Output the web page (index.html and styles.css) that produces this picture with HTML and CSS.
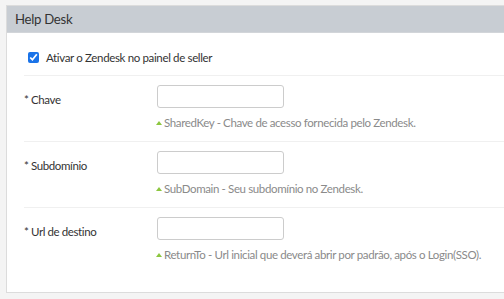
FILE: index.html
```html
<!DOCTYPE html>
<html lang="pt">
<head>
<meta charset="utf-8">
<link rel="stylesheet" href="styles.css">
</head>
<body>
<div class="panel">
  <div class="panel-head">Help Desk</div>
  <div class="panel-body">
    <label class="check-row">
      <input type="checkbox" checked class="check">
      <span>Ativar o Zendesk no painel de seller</span>
    </label>
    <div class="field">
      <div class="label">* Chave</div>
      <div class="control">
        <input type="text" class="input">
        <div class="help"><span class="caret"></span>SharedKey - Chave de acesso fornecida pelo Zendesk.</div>
      </div>
    </div>
    <div class="field">
      <div class="label">* Subdomínio</div>
      <div class="control">
        <input type="text" class="input">
        <div class="help"><span class="caret"></span>SubDomain - Seu subdomínio no Zendesk.</div>
      </div>
    </div>
    <div class="field last">
      <div class="label">* Url de destino</div>
      <div class="control">
        <input type="text" class="input">
        <div class="help"><span class="caret"></span>ReturnTo - Url inicial que deverá abrir por padrão, após o Login(SSO).</div>
      </div>
    </div>
  </div>
</div>
</body>
</html>
```
FILE: styles.css
```css
html, body {
  margin: 0;
  padding: 0;
  background: #f4f4f4;
  font-family: Lato, "Liberation Sans", sans-serif;
  color: #333;
}
body {
  padding: 5px 0 0 6px;
  overflow: hidden;
}
.panel {
  width: 520px;
  background: #fff;
  border: 1px solid #dcdcdc;
  border-right: none;
  height: 288px;
  box-sizing: border-box;
}
.panel-head {
  background: #c8cdd3;
  border-bottom: 1px solid #d2d5d9;
  height: 27px;
  box-sizing: border-box;
  padding: 6px 0 0 8px;
  font-size: 13.2px;
  line-height: 15px;
  letter-spacing: -0.3px;
  color: #333;
}
.panel-body {
  padding: 0 0 0 17px;
}
.check-row {
  display: flex;
  align-items: center;
  height: 43px;
  padding: 7px 0 0 4px;
  gap: 7px;
  font-size: 11.5px;
  letter-spacing: -0.35px;
  border-bottom: 1px solid #f0f0f0;
  box-sizing: border-box;
}
.check {
  margin: 0;
  width: 11px;
  height: 11px;
  accent-color: #1a73e8;
}
.field {
  display: flex;
  border-bottom: 1px solid #f0f0f0;
  height: 66px;
  box-sizing: border-box;
  padding-top: 9px;
}
.field.last {
  border-bottom: none;
}
.label {
  width: 133px;
  font-size: 11.5px;
  letter-spacing: -0.4px;
  line-height: 13px;
  padding-top: 8px;
}
.control {
  display: flex;
  flex-direction: column;
}
.input {
  width: 127px;
  height: 23px;
  box-sizing: border-box;
  border: 1px solid #ccc;
  border-radius: 3px;
  margin: 0;
  background: #fff;
}
.help {
  margin-top: 8px;
  margin-left: -1px;
  font-size: 11.5px;
  letter-spacing: -0.37px;
  line-height: 14px;
  color: #8a8a8a;
  display: flex;
  align-items: center;
  white-space: nowrap;
}
.caret {
  width: 0;
  height: 0;
  border-left: 3px solid transparent;
  border-right: 3px solid transparent;
  border-bottom: 4px solid #8cc63f;
  margin: 0 2px 0 0;
}
```
